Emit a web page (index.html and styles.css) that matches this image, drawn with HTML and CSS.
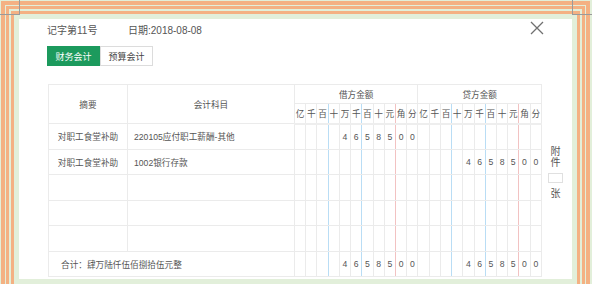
FILE: index.html
```html
<!DOCTYPE html>
<html lang="zh-CN">
<head>
<meta charset="utf-8">
<title>记账凭证</title>
<link rel="stylesheet" href="styles.css">
</head>
<body>
<span class="mark mark-v mark-l"></span>
<span class="mark mark-h mark-hl"></span>
<span class="mark mark-v mark-r"></span>
<span class="mark mark-h mark-hr"></span>
<div class="panel">
  <div class="head">
    <span class="voucher-no">记字第11号</span>
    <span class="voucher-date">日期:2018-08-08</span>
    <svg class="close" width="14" height="14" viewBox="0 0 14 14"><path d="M1 1 L13 13 M13 1 L1 13" stroke="#707070" stroke-width="1.3" fill="none"/></svg>
  </div>
  <div class="tabs">
    <span class="tab tab-active">财务会计</span>
    <span class="tab">预算会计</span>
  </div>
  <div class="main">
    <table class="grid">
      <colgroup>
        <col class="c-summary"><col class="c-subject">
        <col span="22">
      </colgroup>
      <thead>
        <tr class="h1">
          <th rowspan="2">摘要</th>
          <th rowspan="2">会计科目</th>
          <th colspan="11">借方金额</th>
          <th colspan="11">贷方金额</th>
        </tr>
        <tr class="h2">
          <th>亿</th><th>千</th><th class="b">百</th><th>十</th><th>万</th><th class="b">千</th><th>百</th><th>十</th><th class="r">元</th><th>角</th><th>分</th>
          <th>亿</th><th>千</th><th class="b">百</th><th>十</th><th>万</th><th class="b">千</th><th>百</th><th>十</th><th class="r">元</th><th>角</th><th>分</th>
        </tr>
      </thead>
      <tbody>
        <tr>
          <td class="sum">对职工食堂补助</td>
          <td class="subj">220105应付职工薪酬-其他</td>
          <td></td><td></td><td class="b"></td><td></td><td>4</td><td class="b">6</td><td>5</td><td>8</td><td class="r">5</td><td>0</td><td>0</td>
          <td></td><td></td><td class="b"></td><td></td><td></td><td class="b"></td><td></td><td></td><td class="r"></td><td></td><td></td>
        </tr>
        <tr>
          <td class="sum">对职工食堂补助</td>
          <td class="subj">1002银行存款</td>
          <td></td><td></td><td class="b"></td><td></td><td></td><td class="b"></td><td></td><td></td><td class="r"></td><td></td><td></td>
          <td></td><td></td><td class="b"></td><td></td><td>4</td><td class="b">6</td><td>5</td><td>8</td><td class="r">5</td><td>0</td><td>0</td>
        </tr>
        <tr>
          <td></td><td></td>
          <td></td><td></td><td class="b"></td><td></td><td></td><td class="b"></td><td></td><td></td><td class="r"></td><td></td><td></td>
          <td></td><td></td><td class="b"></td><td></td><td></td><td class="b"></td><td></td><td></td><td class="r"></td><td></td><td></td>
        </tr>
        <tr>
          <td></td><td></td>
          <td></td><td></td><td class="b"></td><td></td><td></td><td class="b"></td><td></td><td></td><td class="r"></td><td></td><td></td>
          <td></td><td></td><td class="b"></td><td></td><td></td><td class="b"></td><td></td><td></td><td class="r"></td><td></td><td></td>
        </tr>
        <tr>
          <td></td><td></td>
          <td></td><td></td><td class="b"></td><td></td><td></td><td class="b"></td><td></td><td></td><td class="r"></td><td></td><td></td>
          <td></td><td></td><td class="b"></td><td></td><td></td><td class="b"></td><td></td><td></td><td class="r"></td><td></td><td></td>
        </tr>
        <tr>
          <td class="total" colspan="2">合计：肆万陆仟伍佰捌拾伍元整</td>
          <td></td><td></td><td class="b"></td><td></td><td>4</td><td class="b">6</td><td>5</td><td>8</td><td class="r">5</td><td>0</td><td>0</td>
          <td></td><td></td><td class="b"></td><td></td><td>4</td><td class="b">6</td><td>5</td><td>8</td><td class="r">5</td><td>0</td><td>0</td>
        </tr>
      </tbody>
    </table>
    <div class="side">
      <span class="side-txt">附</span>
      <span class="side-txt">件</span>
      <span class="side-box"></span>
      <span class="side-txt">张</span>
    </div>
  </div>
</div>
</body>
</html>
```

FILE: styles.css
```css
html, body {
  margin: 0;
  padding: 0;
}
body {
  width: 592px;
  height: 284px;
  overflow: hidden;
  background: #e2efda;
  font-family: "Liberation Sans", "Noto Sans CJK SC", sans-serif;
  color: #555;
  position: relative;
}
.mark {
  position: absolute;
  background: #9a9a9a;
  z-index: 2;
}
.mark-v { width: 1px; height: 15px; top: 0; }
.mark-h { height: 1px; width: 20px; top: 14px; }
.mark-l { left: 19px; }
.mark-hl { left: 0; }
.mark-r { left: 572px; }
.mark-hr { left: 572px; }

.panel {
  margin: 19px 0 0 19px;
  width: 553px;
  height: 260px;
  background: #fff;
  box-sizing: border-box;
  padding-left: 28px;
  box-shadow:
    0 0 0 5px #e2efda,
    0 0 0 8px #f4b183,
    0 0 0 10px #e2efda,
    0 0 0 13px #f4b183,
    0 0 0 14px #e2efda,
    0 0 0 18px #f4b183;
}
.head {
  height: 20px;
  display: flex;
  align-items: center;
  padding-right: 28px;
  font-size: 10px;
  color: #555;
}
.voucher-no {
  width: 81px;
}
.voucher-date {
  flex: 1;
}
.close {
  display: block;
  margin-top: -3px;
}
.tabs {
  display: flex;
  margin-top: 7px;
}
.tab {
  width: 53px;
  height: 20px;
  box-sizing: border-box;
  border: 1px solid #dcdcdc;
  display: flex;
  align-items: center;
  justify-content: center;
  font-size: 9px;
  color: #444;
}
.tab-active {
  background: #1c9a5d;
  border-color: #1c9a5d;
  color: #fff;
}
.main {
  display: flex;
  margin-top: 18px;
}
.grid {
  margin-left: 1px;
  width: 494px;
  table-layout: fixed;
  border-collapse: collapse;
  font-size: 8.64px;
  color: #555;
}
.c-summary { width: 79px; }
.c-subject { width: 167px; }
.grid th, .grid td {
  border: 1px solid #ebebeb;
  padding: 0;
  text-align: center;
  font-weight: normal;
  white-space: nowrap;
  overflow: hidden;
}
.grid tr.h1 { height: 19px; }
.grid tr.h2 { height: 20px; }
.grid tr.h2 th { border-bottom: 2px solid #eeeeee; }
.grid tbody tr { height: 25.5px; }
.grid th.b, .grid td.b { border-right-color: #b9ddf5; }
.grid th.r, .grid td.r { border-right-color: #f2c2c2; }
.grid td.subj {
  text-align: left;
  padding-left: 6px;
}
.grid td.total {
  text-align: left;
  padding-left: 12px;
}
.side {
  width: 27px;
  display: flex;
  flex-direction: column;
  align-items: center;
  padding-top: 62px;
  font-size: 10px;
  line-height: 11px;
  color: #555;
}
.side-box {
  width: 15px;
  height: 10px;
  box-sizing: border-box;
  border: 1px solid #e0e0e0;
  margin: 5px 0 5px;
}
```
